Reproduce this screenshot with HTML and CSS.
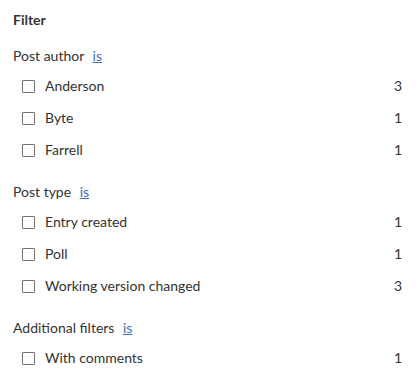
FILE: index.html
```html
<!DOCTYPE html>
<html lang="en">
<head>
    <meta charset="UTF-8">
    <meta name="viewport" content="width=device-width, initial-scale=1.0">
    <title>Filter</title>
    <link rel="stylesheet" href="styles.css">
</head>
<body>
    <div class="filter">
        <h1>Filter</h1>

        <div class="group">
            <div class="group-title">Post author <a href="#">is</a></div>
            <label class="option"><span class="box"></span><span class="name">Anderson</span><span class="count">3</span></label>
            <label class="option"><span class="box"></span><span class="name">Byte</span><span class="count">1</span></label>
            <label class="option"><span class="box"></span><span class="name">Farrell</span><span class="count">1</span></label>
        </div>

        <div class="group">
            <div class="group-title">Post type <a href="#">is</a></div>
            <label class="option"><span class="box"></span><span class="name">Entry created</span><span class="count">1</span></label>
            <label class="option"><span class="box"></span><span class="name">Poll</span><span class="count">1</span></label>
            <label class="option"><span class="box"></span><span class="name">Working version changed</span><span class="count">3</span></label>
        </div>

        <div class="group">
            <div class="group-title">Additional filters <a href="#">is</a></div>
            <label class="option"><span class="box"></span><span class="name">With comments</span><span class="count">1</span></label>
        </div>
    </div>
</body>
</html>
```

FILE: styles.css
```css
:root {
    --text-color: #333333;
    --link-color: #3d6db5;
    --box-border: #707070;
}

* {
    margin: 0;
    padding: 0;
    box-sizing: border-box;
}

body {
    background-color: #ffffff;
    color: var(--text-color);
    font-family: 'Lato', 'Noto Sans', sans-serif;
    font-size: 14px;
    line-height: 20px;
}

.filter {
    padding: 10px 17px 10px 13px;
}

h1 {
    font-size: 14px;
    font-weight: 700;
    line-height: 20px;
    margin-bottom: 16px;
}

.group {
    margin-bottom: 16px;
}

.group-title {
    height: 20px;
    margin-bottom: 4px;
}

.group-title a {
    color: var(--link-color);
    margin-left: 5px;
    text-decoration: underline;
}

.option {
    display: flex;
    align-items: center;
    height: 32px;
    padding-left: 9px;
    cursor: pointer;
}

.box {
    width: 13px;
    height: 13px;
    border: 1px solid var(--box-border);
    border-radius: 1px;
    margin-right: 10px;
    flex-shrink: 0;
}

.name {
    flex: 1;
}

.count {
    text-align: right;
}
```
